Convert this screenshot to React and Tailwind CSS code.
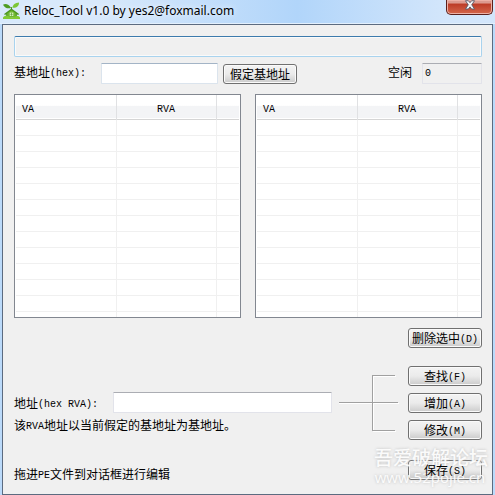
function Latin({ children }) {
  return <span className="align-[1px] font-['Liberation_Mono',monospace] text-[10px] leading-none">{children}</span>
}

function ToolButton({ children, hotkey, className = '' }) {
  return (
    <button
      type="button"
      className={`flex h-5 w-[74px] shrink-0 items-center justify-center whitespace-nowrap rounded-[3px] border border-[#707070] bg-linear-to-b from-[#f3f3f3] from-0% via-[#ebebeb] via-50% to-[#cbcbcb] to-100% leading-none shadow-[inset_0_0_0_1px_#fafafa] ${className}`}
    >
      <span className="relative z-10">
        {children}
        {hotkey && <Latin>({hotkey})</Latin>}
      </span>
    </button>
  )
}

const rows = Array.from({ length: 13 }, (_, i) => i)

function RelocTable({ label }) {
  return (
    <div className="h-56 min-w-0 flex-1 overflow-hidden border border-[#828790] bg-white px-px">
      <table aria-label={label} className="w-full table-fixed border-collapse">
        <colgroup>
          <col className="w-[100px]" />
          <col className="w-[100px]" />
          <col />
        </colgroup>
        <thead>
          <tr className="h-6 border-b border-[#d5d5d5] bg-linear-to-b from-white from-45% to-[#f3f4f6] to-50%">
            <th className="border-r border-[#e0e1e3] p-0 pl-1.5 pt-1 text-left font-normal leading-none">
              <Latin>VA</Latin>
            </th>
            <th className="border-r border-[#e0e1e3] p-0 pt-1 text-center font-normal leading-none">
              <Latin>RVA</Latin>
            </th>
            <th className="p-0" />
          </tr>
        </thead>
        <tbody>
          {rows.map((row) => (
            <tr key={row} className="h-4 border-b border-[#f0f0f0]">
              <td className="border-r border-[#f0f0f0] p-0" />
              <td className="border-r border-[#f0f0f0] p-0" />
              <td className="p-0" />
            </tr>
          ))}
        </tbody>
      </table>
    </div>
  )
}

function AppIcon() {
  return (
    <svg viewBox="0 0 16 16" className="h-[17px] w-[17px] shrink-0" aria-hidden="true">
      <path d="M0 2.500C2.500 1.300 5.800 2.200 7.600 5.600 4.500 6.600 1.500 5.500 0 2.500Z" fill="#4f9d22" />
      <path d="M15 .5c.3 3.200-2 5.300-6.200 5C9.200 2.600 11.500.6 15 .5Z" fill="#7cc735" />
      <path d="M8 4.800v2.500" stroke="#4c951f" strokeWidth="1" />
      <path d="M8 6 1 11.200l.8 1 1.200-.7V14.500h10v-3l1.300.7.8-1Z" fill="#4c951f" />
      <path d="M8 7.800 4 10.700V14h8v-3.300Z" fill="#6fb832" />
      <path d="M6.300 10h3.400v3H6.300Z" fill="#f1ffdf" />
      <path d="M8 10v3M6.300 11.500h3.400" stroke="#4c951f" strokeWidth=".6" />
      <path d="M0 14.500c2-1.800 4-1.800 6-.7 2 .9 3 .9 5 0 2-1 4-.5 5 .7V16H0Z" fill="#82ca35" />
    </svg>
  )
}

function TitleBar() {
  return (
    <header className="flex h-6 items-start justify-between bg-linear-to-r from-[#d8e9fb] from-20% via-[#b1d5fa] via-60% to-[#d3e6fb] to-90% pl-[3px] pr-0.5 shadow-[inset_0_-1px_0_#e3f0fd]">
      <div className="flex items-center gap-1 pt-0.5">
        <AppIcon />
        <h1 className="whitespace-nowrap font-['Noto_Sans',sans-serif] text-[12px] leading-4 text-black [text-shadow:0_0_6px_#fff]">
          Reloc_Tool v1.0 by yes2@foxmail.com
        </h1>
      </div>
      <button
        type="button"
        aria-label="Close"
        className="flex h-[15px] w-[47px] justify-center rounded-b-[5px] border border-t-0 border-[#5b1f1b] bg-linear-to-b from-[#dc9a8f] from-20% via-[#bd3c27] via-30% to-[#d4664b] shadow-[inset_0_0_0_1px_#edb1a6]"
      >
        <svg viewBox="0 0 12 11" className="h-2.5 w-3" aria-hidden="true">
          <path
            d="M1 .8h3.200L6 3 7.800.8H11L7.900 5.300 11 9.900H7.800L6 7.600 4.200 9.900H1l3.100-4.600Z"
            fill="#f7f7f7"
            stroke="#575c6b"
            strokeWidth="1"
          />
        </svg>
      </button>
    </header>
  )
}

function Connector() {
  return (
    <svg viewBox="0 0 60 60" className="h-[60px] w-[60px] shrink-0" fill="none" aria-hidden="true">
      <path d="M34.500 2v56M35 3.500h22M0 30.500h60M34 58.500h23" stroke="#fff" />
      <path d="M33.500 2v56M34 2.500h22M0 29.500h59M33 57.500h23" stroke="#a0a0a0" />
    </svg>
  )
}

export default function App() {
  return (
    <div className="relative bg-[#bbdafa] pb-0.5 font-['Noto_Sans_CJK_SC',sans-serif] text-[12px] leading-4 text-black">
      <TitleBar />
      <main className="mx-0.5 border border-[#5c6b80] bg-[#f0f0f0] pb-3 pl-[11px] pr-2.5 pt-[11px]">
        <input
          readOnly
          aria-label="文件路径"
          className="block h-[21px] w-full rounded-[2px] border border-[#a9d3ee] border-t-[#3d7bad] bg-[#f0f0f0] px-1 shadow-[inset_0_0_0_1px_#fafafa] outline-none"
        />

        <div className="mt-1.5 flex h-[21px] items-center">
          <label htmlFor="base" className="w-[87px] whitespace-nowrap pb-1">
            基地址<Latin>(hex):</Latin>
          </label>
          <input
            id="base"
            className="h-[21px] w-[117px] rounded-[1px] border border-[#dbe4ed] border-t-[#a3b4c6] bg-white px-1 outline-none"
          />
          <ToolButton className="ml-[5px]">假定基地址</ToolButton>
          <label htmlFor="idle" className="ml-auto w-[34px] whitespace-nowrap pb-1">
            空闲
          </label>
          <input
            id="idle"
            readOnly
            defaultValue="0"
            className="h-[21px] w-[60px] rounded-[1px] border border-[#e2e3ea] border-t-[#abadb3] bg-[#f0f0f0] px-0.5 font-['Liberation_Mono',monospace] text-[10px] outline-none"
          />
        </div>

        <div className="mt-2.5 flex gap-3.5">
          <RelocTable label="重定位块" />
          <RelocTable label="重定位项" />
        </div>

        <div className="mt-2.5 flex justify-end">
          <ToolButton hotkey="D">删除选中</ToolButton>
        </div>

        <div className="mt-[18px] flex">
          <div className="min-w-0 flex-1 pt-[26px]">
            <div className="flex items-center">
              <label htmlFor="address" className="w-[99px] shrink-0 whitespace-nowrap">
                地址<Latin>(hex RVA):</Latin>
              </label>
              <input
                id="address"
                className="h-[21px] min-w-0 flex-1 rounded-[1px] border border-[#e2e3ea] border-t-[#abadb3] bg-white px-1 outline-none"
              />
            </div>
            <p className="mt-1">
              该<Latin>RVA</Latin>地址以当前假定的基地址为基地址。
            </p>
          </div>
          <div className="ml-[7px] mr-[9px] mt-[7px]">
            <Connector />
          </div>
          <div className="flex flex-col gap-[7px]">
            <ToolButton hotkey="F">查找</ToolButton>
            <ToolButton hotkey="A">增加</ToolButton>
            <ToolButton hotkey="M">修改</ToolButton>
          </div>
        </div>

        <div className="mt-5 flex items-start justify-between">
          <p className="pt-1.5">
            拖进<Latin>PE</Latin>文件到对话框进行编辑
          </p>
          <ToolButton hotkey="S">保存</ToolButton>
        </div>
      </main>

      <div className="pointer-events-none absolute bottom-2.5 right-[9px] w-28 whitespace-nowrap text-center text-white/90 [text-shadow:0_0_3px_#bbb]">
        <p className="text-[19px] font-medium leading-5">吾爱破解论坛</p>
        <p className="font-['Open_Sans',sans-serif] text-[15px] font-medium leading-5">www.52pojie.cn</p>
      </div>
    </div>
  )
}
